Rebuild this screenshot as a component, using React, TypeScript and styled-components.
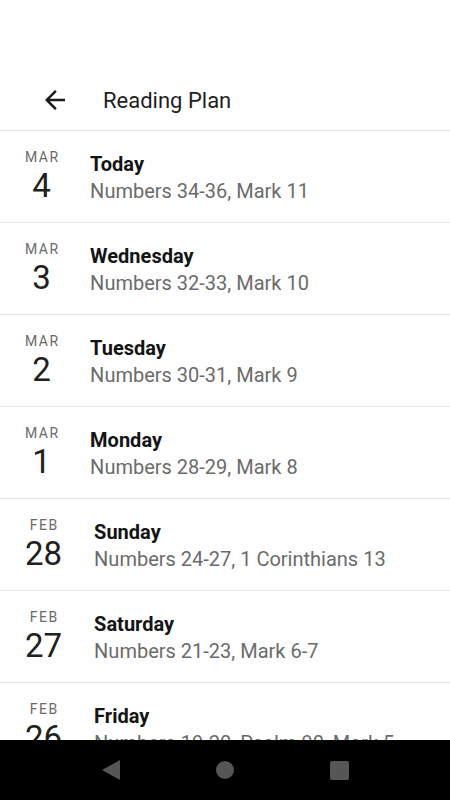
import React from 'react';
import styled, { createGlobalStyle } from 'styled-components';

const GlobalStyle = createGlobalStyle`
  html, body {
    margin: 0;
    padding: 0;
    background: #ffffff;
  }
  body {
    font-family: Roboto, "Noto Sans", "Liberation Sans", sans-serif;
  }
`;

type Reading = {
  month: string;
  day: number;
  label: string;
  passages: string;
};

const readings: Reading[] = [
  { month: 'MAR', day: 4, label: 'Today', passages: 'Numbers 34-36, Mark 11' },
  { month: 'MAR', day: 3, label: 'Wednesday', passages: 'Numbers 32-33, Mark 10' },
  { month: 'MAR', day: 2, label: 'Tuesday', passages: 'Numbers 30-31, Mark 9' },
  { month: 'MAR', day: 1, label: 'Monday', passages: 'Numbers 28-29, Mark 8' },
  { month: 'FEB', day: 28, label: 'Sunday', passages: 'Numbers 24-27, 1 Corinthians 13' },
  { month: 'FEB', day: 27, label: 'Saturday', passages: 'Numbers 21-23, Mark 6-7' },
  { month: 'FEB', day: 26, label: 'Friday', passages: 'Numbers 19-20, Psalm 90, Mark 5' },
];

const Screen = styled.div`
  display: flex;
  flex-direction: column;
  width: 450px;
  height: 800px;
  overflow: hidden;
  background: #ffffff;
`;

const StatusBar = styled.div`
  height: 70px;
  flex-shrink: 0;
`;

const Toolbar = styled.header`
  display: flex;
  align-items: center;
  gap: 33px;
  height: 60px;
  padding-left: 40px;
  flex-shrink: 0;
  border-bottom: 1px solid #e4e4e4;
`;

const BackButton = styled.button`
  display: flex;
  align-items: center;
  justify-content: center;
  width: 30px;
  height: 30px;
  padding: 0;
  border: none;
  background: none;
  color: #1a1a1a;
`;

const Title = styled.h1`
  margin: 0;
  font-size: 22px;
  font-weight: 400;
  color: #1f1f1f;
`;

const List = styled.ul`
  flex: 1;
  margin: 0;
  padding: 0;
  list-style: none;
  overflow: hidden;
`;

const Row = styled.li`
  display: flex;
  align-items: center;
  gap: 32px;
  height: 91px;
  padding-left: 25px;
  border-bottom: 1px solid #e6e6e6;
`;

const DateBlock = styled.div`
  display: flex;
  flex-direction: column;
  align-items: center;
  gap: 3px;
`;

const Month = styled.span`
  font-size: 14px;
  line-height: 16px;
  letter-spacing: 1.5px;
  margin-right: -1.5px;
  color: #6a6a6a;
`;

const Day = styled.span`
  font-size: 33px;
  line-height: 36px;
  color: #202020;
`;

const Info = styled.div`
  display: flex;
  flex-direction: column;
  gap: 3px;
  padding-top: 2px;
`;

const Label = styled.span`
  font-size: 20px;
  line-height: 24px;
  font-weight: 700;
  color: #141414;
`;

const Passages = styled.span`
  font-size: 20px;
  line-height: 24px;
  color: #6b6b6b;
  white-space: nowrap;
`;

const NavBar = styled.nav`
  display: flex;
  align-items: center;
  justify-content: center;
  gap: 90px;
  height: 60px;
  flex-shrink: 0;
  background: #000000;
`;

const NavButton = styled.div`
  display: flex;
  align-items: center;
  justify-content: center;
  width: 24px;
  height: 24px;
`;

const HomeDot = styled.div`
  width: 18px;
  height: 18px;
  border-radius: 50%;
  background: #565656;
`;

const RecentsSquare = styled.div`
  width: 19px;
  height: 19px;
  border-radius: 2px;
  background: #565656;
`;

function BackArrow() {
  return (
    <svg width="30" height="30" viewBox="0 0 24 24" fill="currentColor">
      <path d="M20 11H7.83l5.59-5.59L12 4l-8 8 8 8 1.41-1.41L7.83 13H20v-2z" />
    </svg>
  );
}

export default function App() {
  return (
    <>
      <GlobalStyle />
      <Screen>
        <StatusBar />
        <Toolbar>
          <BackButton aria-label="Back">
            <BackArrow />
          </BackButton>
          <Title>Reading Plan</Title>
        </Toolbar>
        <List>
          {readings.map((r) => (
            <Row key={`${r.month}-${r.day}`}>
              <DateBlock>
                <Month>{r.month}</Month>
                <Day>{r.day}</Day>
              </DateBlock>
              <Info>
                <Label>{r.label}</Label>
                <Passages>{r.passages}</Passages>
              </Info>
            </Row>
          ))}
        </List>
        <NavBar>
          <NavButton>
            <svg width="18" height="20" viewBox="0 0 18 20">
              <path d="M18 0v20L0 10z" fill="#565656" />
            </svg>
          </NavButton>
          <NavButton>
            <HomeDot />
          </NavButton>
          <NavButton>
            <RecentsSquare />
          </NavButton>
        </NavBar>
      </Screen>
    </>
  );
}
